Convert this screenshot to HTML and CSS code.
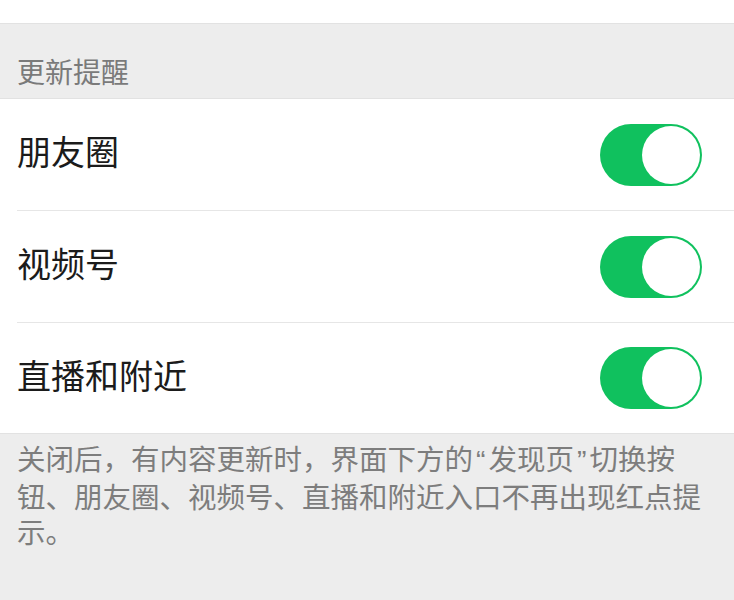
FILE: index.html
```html
<!DOCTYPE html>
<html lang="zh-CN">
<head>
  <meta charset="UTF-8" />
  <meta name="viewport" content="width=device-width, initial-scale=1.0"/>
  <title>更新提醒</title>
  <link rel="stylesheet" href="styles.css">
</head>
<body>

  <div class="top-band"></div>

  <div class="section-title">更新提醒</div>

  <div class="list">
    <div class="row">
      <div class="row-inner">
        <span class="row-label">朋友圈</span>
        <span class="switch on"><span class="knob"></span></span>
      </div>
    </div>
    <div class="row">
      <div class="row-inner">
        <span class="row-label">视频号</span>
        <span class="switch on"><span class="knob"></span></span>
      </div>
    </div>
    <div class="row">
      <div class="row-inner last">
        <span class="row-label">直播和附近</span>
        <span class="switch on"><span class="knob"></span></span>
      </div>
    </div>
  </div>

  <!-- quotes are narrow (latin) in the original -->
  <p class="note">关闭后，有内容更新时，界面下方的<span class="q">“</span>发现页<span class="q">”</span>切换按<br>钮、朋友圈、视频号、直播和附近入口不再出现红点提示。</p>

</body>
</html>
```

FILE: styles.css
```css
* {
  box-sizing: border-box;
  margin: 0;
  padding: 0;
}

body {
  font-family: "Noto Sans CJK SC", "Noto Sans", sans-serif;
  background: #ededed;
  width: 734px;
  min-height: 600px;
  overflow: hidden;
}

.top-band {
  height: 24px;
  background: #fff;
  border-bottom: 1px solid #e2e2e2;
}

.section-title {
  font-size: 28px;
  line-height: 28px;
  color: #7a7a7a;
  padding: 33px 17px 13px;
}

.list {
  background: #fff;
  border-top: 1px solid #e2e2e2;
  border-bottom: 1px solid #e2e2e2;
}

.row {
  padding-left: 17px;
}

.row-inner {
  height: 112px;
  display: flex;
  align-items: center;
  justify-content: space-between;
  padding-right: 32px;
  border-bottom: 1px solid #e6e6e6;
}

.row-inner.last {
  height: 110px;
  border-bottom: none;
}

.row-label {
  font-size: 34px;
  line-height: 40px;
  color: #1b1b1b;
  margin-bottom: 7px;
}

.switch {
  width: 102px;
  height: 62px;
  border-radius: 31px;
  background: #e5e5e5;
  display: flex;
  align-items: center;
  padding: 2px;
}

.switch.on {
  background: #10c15e;
  justify-content: flex-end;
}

.knob {
  width: 58px;
  height: 58px;
  border-radius: 50%;
  background: #fff;
}

.note {
  font-size: 28.5px;
  line-height: 35px;
  color: #7d7d7d;
  padding: 6px 17px 0;
}

.note .q {
  font-family: "Liberation Sans", sans-serif;
  padding: 0 3px;
}
```
